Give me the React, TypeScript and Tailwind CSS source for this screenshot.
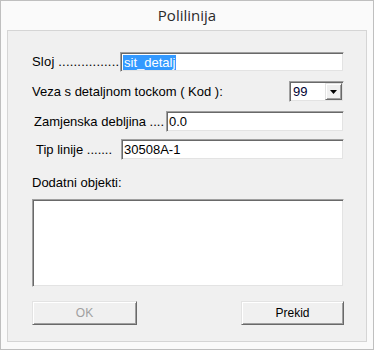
import React from 'react';

const font = { fontFamily: '"Liberation Sans", Arial, sans-serif' };

const sunken =
  'bg-white border border-t-[#a0a0a0] border-l-[#a0a0a0] border-b-[#f0f0f0] border-r-[#f0f0f0] shadow-[inset_1px_1px_0_#696969,inset_-1px_-1px_0_#e3e3e3]';

const raised =
  'bg-[#f0f0f0] border border-t-[#e3e3e3] border-l-[#e3e3e3] border-b-[#696969] border-r-[#696969] shadow-[inset_1px_1px_0_#ffffff,inset_-1px_-1px_0_#a0a0a0]';

export default function App() {
  return (
    <div className="w-[374px] h-[350px] bg-[#fafafa] border border-[#bfbfbf] flex flex-col" style={font}>
      {/* title */}
      <div
        className="h-[29px] flex items-center justify-center text-[15px] text-[#2b2b2b]"
        style={{ fontFamily: '"Open Sans", "Noto Sans", sans-serif' }}
      >
        Polilinija
      </div>

      {/* panel */}
      <div className="mx-[6px] h-[312px] bg-[#f0f0f0] border border-[#d5d5d5] pl-[24px] pr-[22px] pt-[21px] flex flex-col text-[13px] text-black">
        {/* Sloj */}
        <div className="h-[20px] flex items-center">
          <span className="w-[88px] shrink-0 tracking-[0.2px]">Sloj ................</span>
          <div className={`flex-1 h-[20px] flex items-center pl-[2px] ${sunken}`}>
            <span className="bg-[#3399ff] text-white leading-[15px] px-[1px]">sit_detalj</span>
          </div>
        </div>

        {/* Veza */}
        <div className="mt-[9px] h-[21px] flex items-center">
          <span className="flex-1">Veza s detaljnom tockom ( Kod ):</span>
          <div className={`w-[55px] h-[21px] flex items-center ${sunken}`}>
            <span className="flex-1 pl-[3px] text-[#000033]">99</span>
            <div className={`w-[17px] h-[17px] mr-[1px] flex items-center justify-center ${raised}`}>
              <svg width="7" height="4" viewBox="0 0 7 4">
                <path d="M0 0h7L3.5 4z" fill="#000" />
              </svg>
            </div>
          </div>
        </div>

        {/* Zamjenska */}
        <div className="mt-[9px] h-[21px] flex items-center">
          <span className="w-[134px] shrink-0 pl-[2px]">Zamjenska debljina ....</span>
          <div className={`flex-1 h-[21px] flex items-center pl-[2px] ${sunken}`}>0.0</div>
        </div>

        {/* Tip linije */}
        <div className="mt-[7px] h-[21px] flex items-center">
          <span className="w-[89px] shrink-0 pl-[4px]">Tip linije .......</span>
          <div className={`flex-1 h-[21px] flex items-center pl-[2px] ${sunken}`}>30508A-1</div>
        </div>

        {/* Dodatni */}
        <div className="mt-[15px] h-[16px] flex items-center">Dodatni objekti:</div>
        <div className={`mt-[8px] h-[88px] ${sunken}`} />

        {/* buttons */}
        <div className="mt-[14px] flex justify-between">
          <div className={`w-[105px] h-[24px] flex items-center justify-center text-[12px] text-[#a0a0a0] ${raised}`}>
            OK
          </div>
          <div className={`w-[103px] h-[24px] flex items-center justify-center text-[12px] ${raised}`}>
            Prekid
          </div>
        </div>
      </div>
    </div>
  );
}
